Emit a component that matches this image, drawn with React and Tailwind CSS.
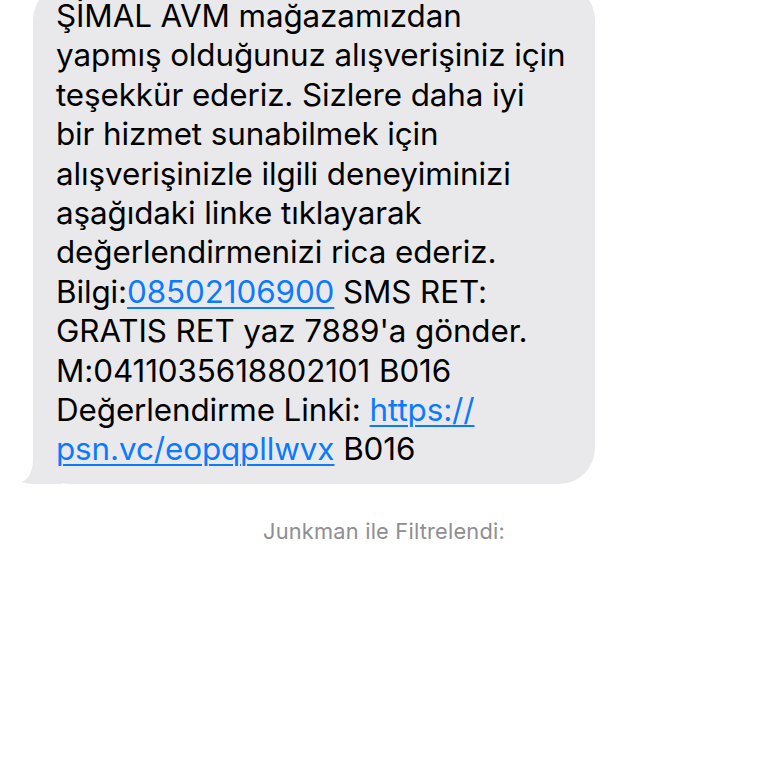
import React from 'react';

const lines = [
  ['ŞİMAL AVM mağazamızdan'],
  ['yapmış olduğunuz alışverişiniz için'],
  ['teşekkür ederiz. Sizlere daha iyi'],
  ['bir hizmet sunabilmek için'],
  ['alışverişinizle ilgili deneyiminizi'],
  ['aşağıdaki linke tıklayarak'],
  ['değerlendirmenizi rica ederiz.'],
  ['Bilgi:', { link: '08502106900' }, ' SMS RET:'],
  ["GRATIS RET yaz 7889'a gönder."],
  ['M:0411035618802101 B016'],
  ['Değerlendirme Linki: ', { link: 'https://' }],
  [{ link: 'psn.vc/eopqpllwvx' }, ' B016'],
];

function Tail() {
  // iMessage style tail on the bottom left corner
  return (
    <svg
      className="absolute left-[-11px] bottom-0"
      width="40"
      height="40"
      viewBox="0 0 40 40"
      aria-hidden="true"
    >
      <path d="M40 0 L40 40 L14 40 C6 40 2 39 0 38 C8 34 11 26 11 14 L11 0 Z" fill="#e9e9eb" />
    </svg>
  );
}

export default function App() {
  return (
    <div className="w-[768px] h-[768px] overflow-hidden bg-white font-['Inter','Noto_Sans',sans-serif]">
      <div className="pl-[33px] mt-[-16px]">
        <div className="relative w-[562px] rounded-[36px] bg-[#e9e9eb] pl-[23px] pt-[13px] pb-[14px]">
          <Tail />
          <div className="relative text-[31.4px] leading-[39.4px] text-black tracking-[-0.1px]">
            {lines.map((parts, i) => (
              <div key={i} className="whitespace-nowrap">
                {parts.map((p, j) =>
                  typeof p === 'string' ? (
                    <span key={j}>{p}</span>
                  ) : (
                    <span
                      key={j}
                      className="text-[#0a7aff] underline decoration-2 underline-offset-[4px]"
                    >
                      {p.link}
                    </span>
                  )
                )}
              </div>
            ))}
          </div>
        </div>
      </div>
      <div className="mt-[31px] text-center text-[21.8px] text-[#8e8e93] tracking-[0.2px]">
        Junkman ile Filtrelendi:
      </div>
    </div>
  );
}
